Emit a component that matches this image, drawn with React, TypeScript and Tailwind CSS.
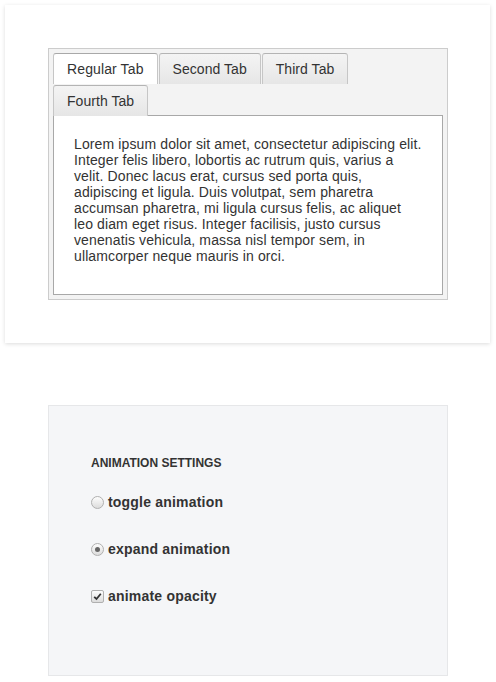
const rows = [["Regular Tab", "Second Tab", "Third Tab"], ["Fourth Tab"]];

function Radio({ checked }: { checked?: boolean }) {
  return (
    <span className="flex h-[13px] w-[13px] items-center justify-center rounded-full border border-[#b0b0b0] bg-gradient-to-b from-[#fdfdfd] to-[#dcdcdc]">
      {checked && <span className="h-[5px] w-[5px] rounded-full bg-[#666]" />}
    </span>
  );
}

function Checkbox() {
  return (
    <span className="flex h-[13px] w-[13px] items-center justify-center rounded-[2px] border border-[#b0b0b0] bg-gradient-to-b from-[#fdfdfd] to-[#dcdcdc]">
      <svg width="9" height="9" viewBox="0 0 9 9">
        <path d="M1.2 4.8 L3.5 7 L7.8 1.8" fill="none" stroke="#333" strokeWidth="1.8" />
      </svg>
    </span>
  );
}

export default function App() {
  return (
    <div className="min-h-[682px] bg-white pt-[5px] font-['Liberation_Sans',Arial,sans-serif] tracking-[0.12px] text-[#333]">
      <div className="ml-[5px] w-[485px] bg-white p-[43px] shadow-[0_1px_4px_rgba(0,0,0,0.14)]">
        <div className="w-[400px] border border-[#cccccc] bg-[#f3f3f3] p-1">
          <div className="flex flex-col gap-px">
            {rows.map((row, r) => (
              <div key={r} className="flex gap-px">
                {row.map((t) => (
                  <div
                    key={t}
                    className={
                      t === "Regular Tab"
                        ? "flex h-[31px] items-center rounded-t-[3px] border border-b-0 border-[#c6c6c6] border-t-[#a8a8a8] bg-white px-[13px] text-[14px]"
                        : "flex h-[31px] items-center rounded-t-[3px] border border-b-0 border-[#c6c6c6] border-t-[#b4b4b4] bg-gradient-to-b from-[#f4f4f4] to-[#e6e6e6] px-[13px] text-[14px] tracking-[0.05px]"
                    }
                  >
                    {t}
                  </div>
                ))}
              </div>
            ))}
          </div>
          <div className="-mt-px h-[180px] border border-[#a8a8a8] bg-white px-5 pt-5 text-[14px] leading-4">
            <p>
              Lorem ipsum dolor sit amet, consectetur adipiscing elit. Integer felis libero, lobortis ac rutrum quis,
              varius a velit. Donec lacus erat, cursus sed porta quis, adipiscing et ligula. Duis volutpat, sem
              pharetra accumsan pharetra, mi ligula cursus felis, ac aliquet leo diam eget risus. Integer facilisis,
              justo cursus venenatis vehicula, massa nisl tempor sem, in ullamcorper neque mauris in orci.
            </p>
          </div>
        </div>
      </div>

      <div className="ml-[48px] mt-[62px] h-[271px] w-[400px] border border-[#e6e7e9] bg-[#f5f6f8] pl-[42px] pt-[50px]">
        <h3 className="text-[12px] font-bold uppercase leading-[14px] tracking-[0px] text-[#333]">Animation Settings</h3>
        <div className="mt-[22px] flex flex-col gap-[27px] text-[14px] font-bold leading-5 tracking-[0.2px] text-[#333]">
          <label className="flex items-center gap-[4px]">
            <Radio />
            toggle animation
          </label>
          <label className="flex items-center gap-[4px]">
            <Radio checked />
            expand animation
          </label>
          <label className="flex items-center gap-[4px]">
            <Checkbox />
            animate opacity
          </label>
        </div>
      </div>
    </div>
  );
}
